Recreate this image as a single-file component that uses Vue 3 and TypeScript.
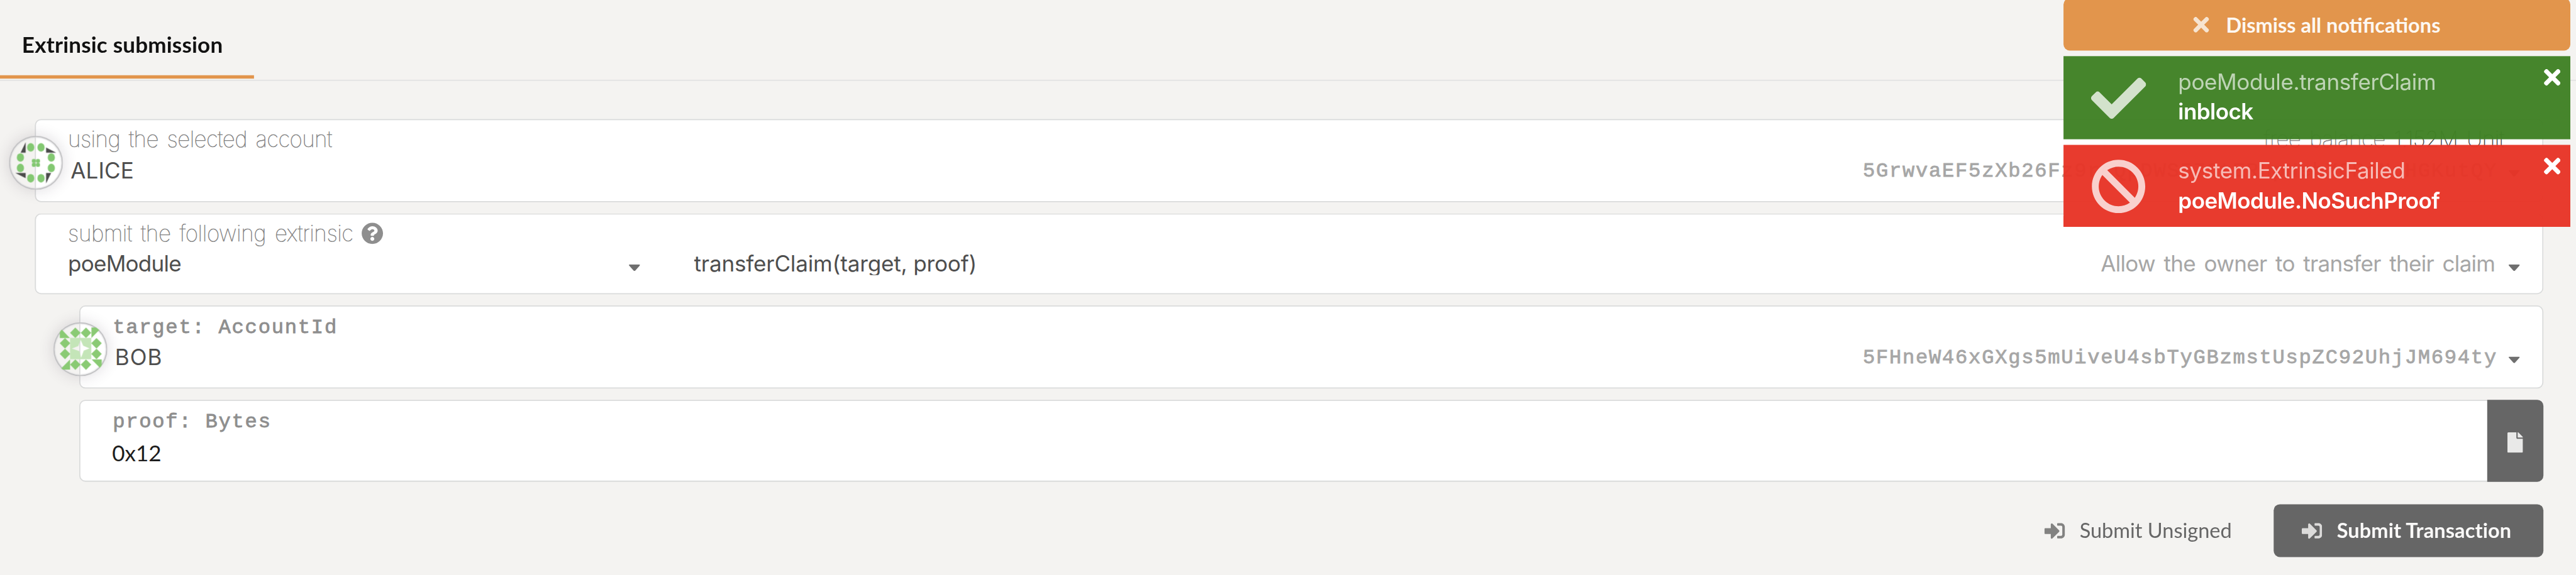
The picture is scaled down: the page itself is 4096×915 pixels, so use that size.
<script setup lang="ts">
interface Notice {
  kind: 'success' | 'error'
  action: string
  message: string
  icon: string
}

const icons = {
  times:
    'M242.72 256l100.07-100.07c12.28-12.28 12.28-32.19 0-44.48l-22.24-22.24c-12.28-12.28-32.19-12.28-44.48 0L176 189.28 75.93 89.21c-12.28-12.28-32.19-12.28-44.48 0L9.21 111.45c-12.28 12.28-12.28 32.19 0 44.48L109.28 256 9.21 356.07c-12.28 12.28-12.28 32.19 0 44.48l22.24 22.24c12.28 12.28 32.2 12.28 44.48 0L176 322.72l100.07 100.07c12.28 12.28 32.2 12.28 44.48 0l22.24-22.24c12.28-12.28 12.28-32.19 0-44.48L242.72 256z',
  check:
    'M173.898 439.404l-166.4-166.4c-9.997-9.997-9.997-26.206 0-36.204l36.203-36.204c9.997-9.998 26.207-9.998 36.204 0L192 312.69 432.095 72.596c9.997-9.997 26.207-9.997 36.204 0l36.203 36.204c9.997 9.997 9.997 26.206 0 36.204l-294.4 294.401c-9.998 9.997-26.207 9.997-36.204-.001z',
  ban: 'M256 8C119.034 8 8 119.033 8 256s111.034 248 248 248 248-111.034 248-248S392.967 8 256 8zm130.108 117.892c65.448 65.448 70 165.481 20.677 235.637L150.47 105.216c70.204-49.356 170.226-44.735 235.638 20.676zM125.892 386.108c-65.448-65.448-70-165.481-20.677-235.637L361.53 406.784c-70.203 49.356-170.226 44.735-235.638-20.676z',
  help: 'M504 256c0 136.997-111.043 248-248 248S8 392.997 8 256C8 119.083 119.043 8 256 8s248 111.083 248 248zM262.655 90c-54.497 0-89.255 22.957-116.549 63.758-3.536 5.286-2.353 12.415 2.715 16.258l34.699 26.31c5.205 3.947 12.621 3.008 16.665-2.122 17.864-22.658 30.113-35.797 57.303-35.797 20.429 0 45.698 13.148 45.698 32.958 0 14.976-12.363 22.667-32.534 33.976C247.128 238.528 216 254.941 216 296v4c0 6.627 5.373 12 12 12h56c6.627 0 12-5.373 12-12v-1.333c0-28.462 83.186-29.647 83.186-106.667 0-58.002-60.165-102-116.531-102zM256 338c-25.365 0-46 20.635-46 46 0 25.364 20.635 46 46 46s46-20.636 46-46c0-25.365-20.635-46-46-46z',
  file: 'M224 136V0H24C10.7 0 0 10.7 0 24v464c0 13.3 10.7 24 24 24h336c13.3 0 24-10.7 24-24V160H248c-13.2 0-24-10.8-24-24zm160-14.1v6.1H256V0h6.1c6.4 0 12.5 2.5 17 7l97.9 98c4.5 4.5 7 10.6 7 16.9z',
  signIn:
    'M416 448h-84c-6.6 0-12-5.4-12-12v-40c0-6.6 5.4-12 12-12h84c17.7 0 32-14.3 32-32V160c0-17.7-14.3-32-32-32h-84c-6.6 0-12-5.4-12-12V76c0-6.6 5.4-12 12-12h84c53 0 96 43 96 96v192c0 53-43 96-96 96zm-47-201L201 79c-15-15-41-4.5-41 17v96H24c-13.3 0-24 10.7-24 24v96c0 13.3 10.7 24 24 24h136v96c0 21.5 26 32 41 17l168-168c9.3-9.4 9.3-24.6 0-34z',
  caret: 'M1.5 0H18.5Q20.6 .3 19.3 2L11.6 10.8Q10 12.4 8.4 10.8L.7 2Q-.6 .3 1.5 0Z',
}

const notices: Notice[] = [
  { kind: 'success', action: 'poeModule.transferClaim', message: 'inblock', icon: icons.check },
  { kind: 'error', action: 'system.ExtrinsicFailed', message: 'poeModule.NoSuchProof', icon: icons.ban },
]

const aliceDots: [number, number][] = [
  [145, 105], [200, 105], [90, 159], [90, 215], [255, 159], [255, 215], [145, 270], [200, 270],
]
const aliceCore: [number, number][] = [[170, 189], [192, 189], [170, 210], [192, 210]]
const bobDiamonds: [number, number][] = [
  [160, 128], [217, 128], [105, 184], [105, 241], [273, 184], [273, 241], [160, 298], [217, 298],
]
</script>

<template>
  <div class="viewport">
    <div class="page">
      <header class="tabs">
        <div class="tab">Extrinsic submission</div>
      </header>

      <main class="form">
        <section class="card">
          <svg class="identicon" viewBox="48 66 288 288">
            <g fill="#83c872">
              <rect v-for="[x, y] in aliceDots" :key="`${x}-${y}`" :x="x" :y="y" width="38" height="45" rx="19" ry="21" />
              <rect v-for="[x, y] in aliceCore" :key="`c${x}-${y}`" :x="x" :y="y" width="21.5" height="21.5" rx="8" />
            </g>
            <path fill="#4b4b4b" d="M137 100V156H110ZM246 128L300 156H246ZM82 264H137V292ZM246 264H273L246 320Z" />
          </svg>
          <div class="label-row">
            <span class="label using">using the selected account</span>
            <span class="label balance">free balance <span class="amount">1.152M Unit</span></span>
          </div>
          <div class="value-row">
            <span class="value alice">ALICE</span>
            <span class="address">5GrwvaEF5zXb26Fz9rcQpDWS57CtERHpNehXCPcNoHGKutQY</span>
            <svg class="caret" viewBox="0 0 20 12"><path :d="icons.caret" /></svg>
          </div>
        </section>

        <section class="card call">
          <div class="label-row">
            <span class="label submit">submit the following extrinsic</span>
            <svg class="help" viewBox="0 0 512 512"><path :d="icons.help" /></svg>
          </div>
          <div class="value-row">
            <div class="module">
              <span class="value poe">poeModule</span>
              <svg class="caret" viewBox="0 0 20 12"><path :d="icons.caret" /></svg>
            </div>
            <span class="value method">transferClaim(target, proof)</span>
            <span class="value hint">Allow the owner to transfer their claim</span>
            <svg class="caret" viewBox="0 0 20 12"><path :d="icons.caret" /></svg>
          </div>
        </section>

        <section class="card param">
          <svg class="identicon" viewBox="43 72 288 288">
            <path fill="#8aca74" d="M77 100L131 156H77ZM246 100H301L246 156ZM132 270V325H78ZM247 270H301V325Z" />
            <path
              v-for="[x, y] in bobDiamonds" :key="`${x}-${y}`" fill="#8aca74"
              :d="`M${x} ${y - 28}L${x + 28} ${y}L${x} ${y + 28}L${x - 28} ${y}Z`"
            />
            <path
              fill="#c4e5b8" fill-rule="evenodd"
              d="M132 155H245V269H132ZM188 165L202 197L236 211L205 223L191 261L181 226L141 212L176 199Z"
            />
          </svg>
          <div class="label-row"><span class="label mono">target: AccountId</span></div>
          <div class="value-row">
            <span class="value bob">BOB</span>
            <span class="address">5FHneW46xGXgs5mUiveU4sbTyGBzmstUspZC92UhjJM694ty</span>
            <svg class="caret" viewBox="0 0 20 12"><path :d="icons.caret" /></svg>
          </div>
        </section>

        <section class="card param bytes">
          <div class="bytes-body">
            <div class="label-row"><span class="label mono">proof: Bytes</span></div>
            <div class="value hex">0x12</div>
          </div>
          <button class="upload"><svg viewBox="0 0 384 512"><path :d="icons.file" /></svg></button>
        </section>

        <div class="actions">
          <button class="action">
            <svg viewBox="0 0 512 512"><path :d="icons.signIn" /></svg><span>Submit Unsigned</span>
          </button>
          <button class="action primary">
            <svg viewBox="0 0 512 512"><path :d="icons.signIn" /></svg><span>Submit Transaction</span>
          </button>
        </div>
      </main>

      <aside class="notices">
        <button class="dismiss">
          <svg viewBox="0 80 352 352"><path :d="icons.times" /></svg><span>Dismiss all notifications</span>
        </button>
        <div v-for="n in notices" :key="n.action" class="notice" :class="n.kind">
          <svg class="status" viewBox="0 0 512 512"><path :d="n.icon" /></svg>
          <div class="notice-text">
            <div class="notice-action">{{ n.action }}</div>
            <div class="notice-message">{{ n.message }}</div>
          </div>
          <svg class="close" viewBox="0 80 352 352"><path :d="icons.times" /></svg>
        </div>
      </aside>
    </div>
  </div>
</template>

<style>
body {
  background: #f4f3f1;
}
</style>

<style scoped>
.viewport {
  width: 4096px;
  height: 915px;
  overflow: hidden;
  background: #f4f3f1;
}
.page {
  position: relative;
  width: 4584px;
  height: 1024px;
  transform: scale(0.893543);
  transform-origin: 0 0;
  font-family: Inter, "Liberation Sans", sans-serif;
  font-size: 39.2px;
  line-height: 40px;
  color: #4e4e4e;
  white-space: nowrap;
}
.page * {
  box-sizing: border-box;
}
svg {
  display: block;
  flex: none;
  fill: currentColor;
}
button {
  border: 0;
  padding: 0;
  margin: 0;
  color: inherit;
}

.tabs {
  height: 144px;
  border-bottom: 2px solid #e2e2e2;
}
.tab {
  width: 452px;
  height: 140px;
  padding: 59px 0 0 39px;
  border-bottom: 6px solid #e2954c;
  font-family: Lato, sans-serif;
  font-weight: 700;
  letter-spacing: 0.22px;
  color: #111;
}

.form {
  display: flex;
  flex-direction: column;
  gap: 20px;
  padding: 68px 58px 0 62px;
}
.card {
  position: relative;
  height: 148px;
  padding: 13.7px 40px 0 57px;
  border: 2px solid #dadbdb;
  border-radius: 11px;
  background: #fff;
}
.call {
  height: 144px;
}
.param {
  margin-left: 78.5px;
}
.identicon {
  position: absolute;
  left: -48px;
  top: 28px;
  width: 96px;
  height: 96px;
  border-radius: 50%;
  box-shadow: inset 0 0 0 2px #bcbcbe, inset 0 0 0 4px rgba(225, 225, 228, 0.5), 0 0 24px 4px rgba(60, 50, 70, 0.13);
}
.label-row {
  display: flex;
  align-items: center;
  height: 40px;
}
.label {
  font-weight: 100;
  color: #7c7c7c;
  word-spacing: 5px;
  -webkit-text-stroke: 0.5px currentColor;
}
.using {
  letter-spacing: -0.69px;
}
.submit {
  letter-spacing: -0.47px;
}
.balance {
  margin: 0 28px 0 auto;
  letter-spacing: -0.58px;
}
.amount {
  color: #333;
}
.help {
  width: 39.2px;
  height: 39.2px;
  margin-left: 14px;
  color: #8e8e8e;
}
.mono {
  height: 40px;
  padding: 4px 0 0 1px;
  font-family: "Liberation Mono", monospace;
  font-weight: 400;
  font-size: 36px;
  letter-spacing: 1.95px;
  word-spacing: 0;
  color: #8e8e8e;
  -webkit-text-stroke: 0.9px currentColor;
}

.value-row {
  display: flex;
  align-items: flex-start;
  height: 40px;
  margin-top: 16.3px;
}
.call .value-row {
  margin-top: 14px;
}
.alice {
  margin-left: 4.5px;
  letter-spacing: 0.2px;
}
.bob {
  margin-left: 5px;
  letter-spacing: 1.2px;
}
.module {
  display: flex;
  justify-content: space-between;
  width: 1018px;
}
.poe {
  letter-spacing: -0.85px;
}
.method {
  height: 40px;
  margin-left: 96px;
  overflow: hidden;
  letter-spacing: -0.16px;
}
.hint {
  margin: 0 4px 0 auto;
  color: #a6a6a6;
  letter-spacing: -0.79px;
  word-spacing: 5px;
}
.address {
  margin-left: auto;
  padding-top: 2.4px;
  font-family: "Liberation Mono", monospace;
  font-size: 36px;
  letter-spacing: 1.92px;
  color: #a6a6a6;
  -webkit-text-stroke: 0.9px currentColor;
}
.caret {
  width: 20px;
  height: 12px;
  margin: 19px 0 0 20px;
  color: #6f6f6f;
}
.call .caret {
  margin-top: 21.3px;
}

.bytes {
  display: flex;
  height: 146px;
  padding: 0;
}
.bytes-body {
  flex: 1;
  padding: 13.7px 0 0 57px;
}
.hex {
  margin-top: 19.1px;
  font-family: Lato, sans-serif;
  color: #1d1d1d;
}
.upload {
  display: flex;
  align-items: center;
  justify-content: center;
  width: 100px;
  height: 146px;
  margin: -2px -2px 0 0;
  padding-top: 6px;
  border-radius: 0 11px 11px 0;
  background: #666;
  color: #e9e9e8;
}
.upload svg {
  width: 27.3px;
  height: 36.4px;
}

.actions {
  display: flex;
  justify-content: flex-end;
  gap: 74.5px;
  margin-top: 20px;
}
.action {
  display: flex;
  align-items: center;
  gap: 26px;
  height: 94px;
  background: none;
  font: 400 36.4px/40px Lato, sans-serif;
  color: #666;
}
.action svg {
  width: 36.4px;
  height: 36.4px;
  opacity: 0.8;
}
.action span {
  padding-bottom: 3px;
}
.primary {
  width: 480px;
  padding-left: 50px;
  border-radius: 11px;
  background: #666;
  color: #faf9f8;
  font-weight: 700;
  letter-spacing: 0.12px;
}

.notices {
  position: absolute;
  top: -3px;
  right: 10px;
  width: 902px;
  display: flex;
  flex-direction: column;
  gap: 10px;
}
.dismiss {
  display: flex;
  align-items: center;
  justify-content: center;
  gap: 30px;
  height: 93px;
  border-radius: 11px;
  background: #e2954c;
  color: #fdf8f2;
  font: 700 36.4px/40px Lato, sans-serif;
}
.dismiss svg {
  width: 28px;
  height: 28px;
  opacity: 0.8;
}
.notice {
  position: relative;
  display: flex;
  height: 148px;
  color: #fff;
}
.success {
  background: rgba(64, 129, 37, 0.97);
}
.error {
  height: 146px;
  background: rgba(231, 53, 39, 0.97);
}
.status {
  width: 98px;
  height: 98px;
  margin: 26px 0 0 48.5px;
  opacity: 0.76;
}
.error .status {
  margin-top: 24.5px;
}
.notice-text {
  padding: 25.7px 0 0 57.5px;
}
.notice-action {
  opacity: 0.65;
  letter-spacing: -0.42px;
}
.notice-message {
  margin-top: 13.8px;
  font-weight: 600;
  letter-spacing: -0.63px;
}
.close {
  position: absolute;
  top: 23px;
  right: 18px;
  width: 29.5px;
  height: 29.5px;
}
</style>
